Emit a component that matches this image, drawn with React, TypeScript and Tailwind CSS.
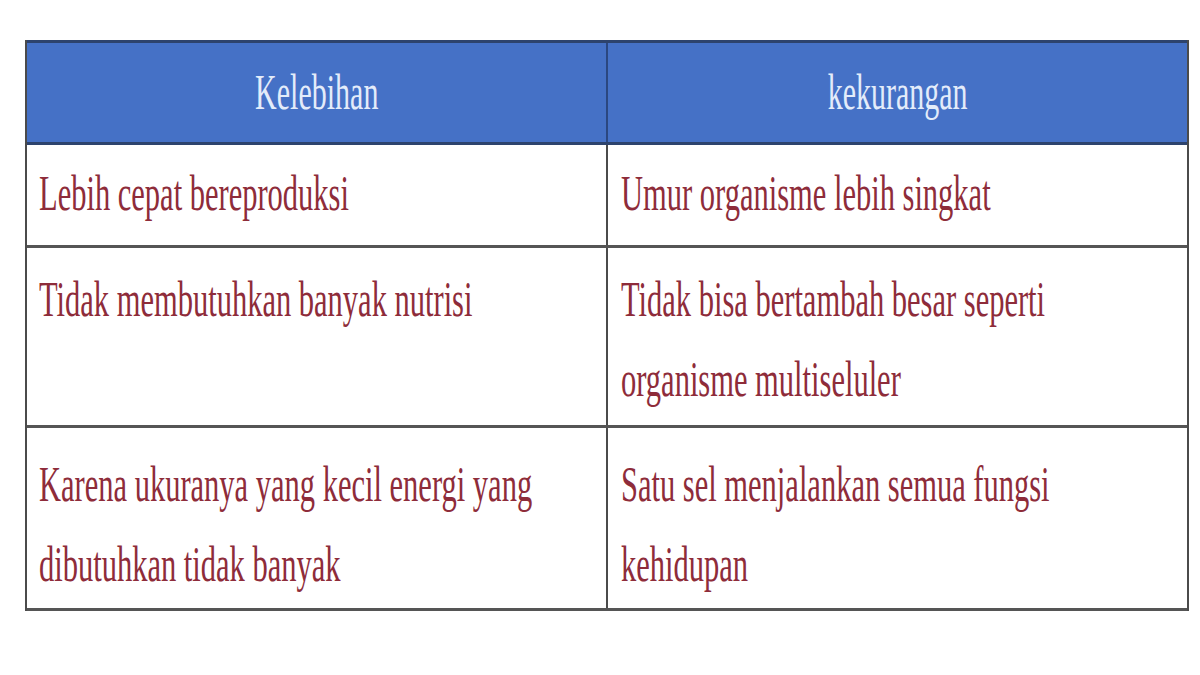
const rows = [
  {
    h: 'h-[103px]',
    pt: 'pt-[8px]',
    left: ['Lebih cepat bereproduksi'],
    right: ['Umur organisme lebih singkat'],
  },
  {
    h: 'h-[180px]',
    pt: 'pt-[11px]',
    left: ['Tidak membutuhkan banyak nutrisi'],
    right: ['Tidak bisa bertambah besar seperti', 'organisme multiseluler'],
  },
  {
    h: 'h-[183px]',
    pt: 'pt-[16px]',
    left: ['Karena ukuranya yang kecil energi yang', 'dibutuhkan tidak banyak'],
    right: ['Satu sel menjalankan semua fungsi', 'kehidupan'],
  },
];

const Cell = ({ lines, pt, last }: { lines: string[]; pt: string; last?: boolean }) => (
  <div className={`${pt} ${last ? 'pl-[13px]' : 'pl-[12px] border-r-2 border-[#4b4b4b]'} overflow-hidden`}>
    <span className="inline-block origin-left scale-x-[0.61] whitespace-nowrap text-[50px] leading-[80px] text-[#8e2c3a]">
      {lines.map((line, i) => (
        <span key={i}>
          {line}
          {i < lines.length - 1 && <br />}
        </span>
      ))}
    </span>
  </div>
);

export default function App() {
  return (
    <div className="w-[1200px] h-[675px] bg-white pt-[40px] pl-[25px] font-['Liberation_Serif',serif] overflow-hidden">
      <div className="w-[1164px] border-l-2 border-r-2 border-[#4b4b4b]">
        {/* Header */}
        <div className="grid grid-cols-[581px_1fr] h-[105px] bg-[#4571c6] border-t-[3px] border-b-[3px] border-[#2d436d]">
          <div className="flex items-center justify-center pb-[2px] border-r-2 border-[#2b4780]">
            <span className="inline-block scale-x-[0.6] whitespace-nowrap text-[50px] leading-[80px] text-[#e3ecfa]">
              Kelebihan
            </span>
          </div>
          <div className="flex items-center justify-center pb-[2px]">
            <span className="inline-block scale-x-[0.6] whitespace-nowrap text-[50px] leading-[80px] text-[#e3ecfa]">
              kekurangan
            </span>
          </div>
        </div>

        {/* Body rows */}
        {rows.map((row, i) => (
          <div
            key={i}
            className={`grid grid-cols-[581px_1fr] ${row.h} border-b-[3px] border-[#555555]`}
          >
            <Cell lines={row.left} pt={row.pt} />
            <Cell lines={row.right} pt={row.pt} last />
          </div>
        ))}
      </div>
    </div>
  );
}
